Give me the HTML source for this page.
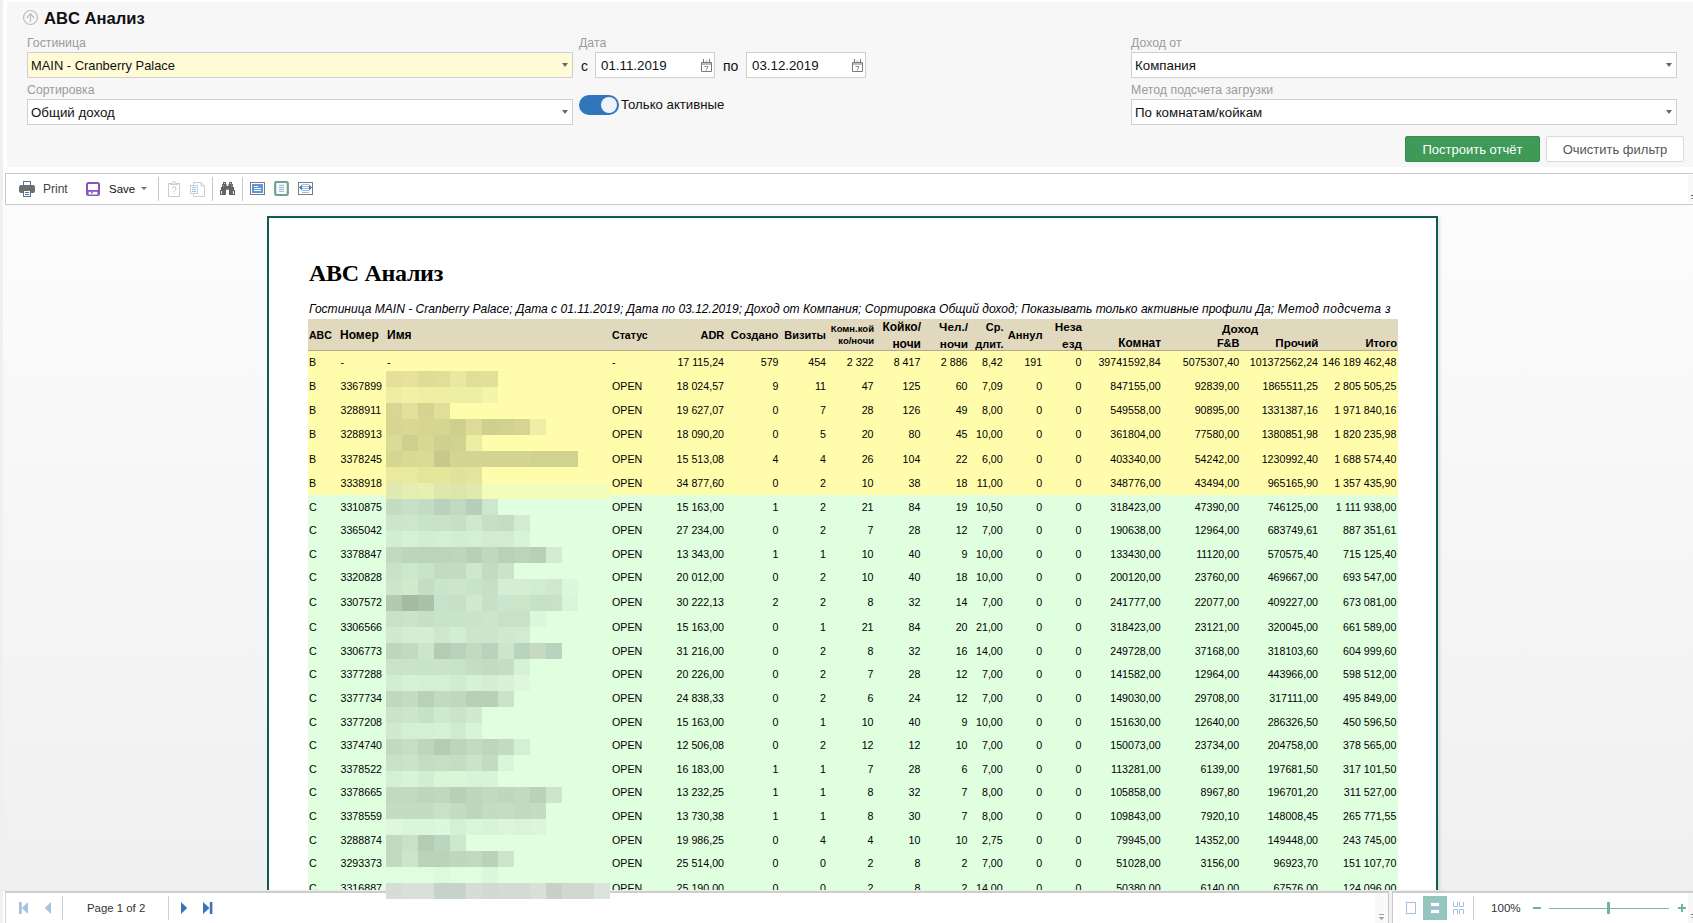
<!DOCTYPE html>
<html><head><meta charset="utf-8"><title>ABC Анализ</title>
<style>
*{box-sizing:border-box;margin:0;padding:0}
html,body{width:1693px;height:923px;overflow:hidden;background:#fff;font-family:"Liberation Sans",sans-serif;color:#111;position:relative}
.a{position:absolute;white-space:nowrap}
#strip{left:0;top:0;width:3px;height:923px;background:#f0f0f0}
#panel{left:7px;top:2px;width:1686px;height:165px;background:#f7f7f7;border-radius:2px 0 0 2px}
.lbl{position:absolute;font-size:12.3px;color:#9b9b9b;line-height:14px}
.inp{position:absolute;height:26px;border:1px solid #cfcfcf;background:#fff;font-size:13.3px;line-height:24px;padding-top:1px;padding-left:3px;color:#111}
.arr{position:absolute;right:4px;top:10px;width:0;height:0;border-left:3px solid transparent;border-right:3px solid transparent;border-top:4px solid #666}
.cal{position:absolute;top:6px;right:2px;width:12px;height:13px}
#tb{left:5px;top:173px;width:1690px;height:32px;border:1px solid #c8c8c8;background:#fff}
#viewer{left:3px;top:205px;width:1690px;height:687px;background:linear-gradient(#fcfcfc,#f0f0f0)}
#page{left:267px;top:216px;width:1171px;height:740px;border:2px solid #135b50;background:#fff;overflow:hidden;box-shadow:2px 1px 3px rgba(0,0,0,0.10)}
.c{position:absolute;font-size:10.67px;line-height:13px;white-space:nowrap;color:#000}
.c.r{text-align:right}
.h{position:absolute;font-size:11px;font-weight:bold;line-height:13px;white-space:nowrap;color:#000}
.hs{position:absolute;font-size:8.5px;font-weight:bold;line-height:10px;white-space:nowrap;color:#000}
#mos i{position:absolute;width:16px;height:16px;display:block}
#bb{left:5px;top:891px;width:1384px;height:32px;border-top:2px solid #cdcdcd;border-left:1px solid #d8d8d8;border-right:1px solid #c8c8c8;background:#fff}
#bb2{left:1392px;top:891px;width:301px;height:32px;border-top:2px solid #cdcdcd;border-left:1px solid #c8c8c8;background:#fff}
</style></head><body>
<div class="a" id="strip"></div>
<div class="a" id="panel"></div>

<!-- title -->
<svg class="a" style="left:22px;top:9px" width="17" height="17" viewBox="0 0 17 17"><circle cx="8.5" cy="8.5" r="7" fill="none" stroke="#bdbdbd" stroke-width="1.2"/><path d="M8.5 13V4.5M4.8 9l3.7-4.3L12.2 9" fill="none" stroke="#bdbdbd" stroke-width="1.2"/></svg>
<div class="a" style="left:44px;top:9px;font-size:16.6px;font-weight:bold;line-height:20px;color:#111">ABC Анализ</div>

<div class="lbl" style="left:27px;top:36px">Гостиница</div>
<div class="inp" style="left:27px;top:52px;width:546px;background:#fffbd6;font-size:12.9px">MAIN - Cranberry Palace<span class="arr"></span></div>
<div class="lbl" style="left:27px;top:83px">Сортировка</div>
<div class="inp" style="left:27px;top:99px;width:546px">Общий доход<span class="arr"></span></div>

<div class="lbl" style="left:579px;top:36px">Дата</div>
<div class="a" style="left:581px;top:58px;font-size:14px;line-height:16px">с</div>
<div class="inp" style="left:595px;top:52px;width:120px;padding-left:5px">01.11.2019<svg class="cal" style="top:6px;right:2px;width:11px;height:13px" viewBox="0 0 11 13"><path d="M0.5 3.5h10v9h-10z" fill="none" stroke="#7a7a7a"/><path d="M0.5 5h10" stroke="#7a7a7a"/><path d="M2.5 0v4M8.5 0v4" stroke="#7a7a7a"/><path d="M4.5 2h2" stroke="#aaa"/><path d="M3.5 7.5h3.5l-2 4" fill="none" stroke="#888" stroke-width="0.9"/></svg></div>
<div class="a" style="left:723px;top:58px;font-size:14px;line-height:16px">по</div>
<div class="inp" style="left:746px;top:52px;width:120px;padding-left:5px">03.12.2019<svg class="cal" style="top:6px;right:2px;width:11px;height:13px" viewBox="0 0 11 13"><path d="M0.5 3.5h10v9h-10z" fill="none" stroke="#7a7a7a"/><path d="M0.5 5h10" stroke="#7a7a7a"/><path d="M2.5 0v4M8.5 0v4" stroke="#7a7a7a"/><path d="M4.5 2h2" stroke="#aaa"/><path d="M3.5 7.5h3.5l-2 4" fill="none" stroke="#888" stroke-width="0.9"/></svg></div>

<div class="a" style="left:579px;top:95px;width:40px;height:20px;border-radius:10px;background:#2f76ba"></div>
<div class="a" style="left:601px;top:97px;width:16px;height:16px;border-radius:8px;background:#eef3f9"></div>
<div class="a" style="left:621px;top:97px;font-size:13.2px;line-height:16px">Только активные</div>

<div class="lbl" style="left:1131px;top:36px">Доход от</div>
<div class="inp" style="left:1131px;top:52px;width:546px">Компания<span class="arr"></span></div>
<div class="lbl" style="left:1131px;top:83px">Метод подсчета загрузки</div>
<div class="inp" style="left:1131px;top:99px;width:546px">По комнатам/койкам<span class="arr"></span></div>

<div class="a" style="left:1405px;top:136px;width:135px;height:26px;border-radius:2px;background:#3e9a56;border:1px solid #358c4b;color:#fff;font-size:13px;line-height:26px;text-align:center">Построить отчёт</div>
<div class="a" style="left:1546px;top:136px;width:138px;height:26px;border-radius:2px;background:#fff;border:1px solid #dadada;color:#555;font-size:13px;line-height:26px;text-align:center">Очистить фильтр</div>

<!-- toolbar -->
<div class="a" id="tb"></div><div class="a" style="left:1688px;top:175px;width:5px;height:28px;background:#f8f8f8"></div><div class="a" style="left:1691px;top:195px;width:2px;height:1px;background:#5a6478"></div><div class="a" style="left:1691px;top:198px;width:2px;height:1px;background:#8a94a8"></div>
<svg class="a" style="left:19px;top:181px" width="16" height="16" viewBox="0 0 16 16"><rect x="0" y="4" width="16" height="8" rx="2" fill="#6e6e6e"/><rect x="4.5" y="0.5" width="7" height="5" fill="#fff" stroke="#6e6e6e"/><path d="M5 4.5h6" stroke="#3b7dc4"/><rect x="4.5" y="9.5" width="7" height="6" fill="#fff" stroke="#6e6e6e"/><path d="M6 11.5h4M6 13.5h4" stroke="#3b7dc4"/></svg>
<div class="a" style="left:43px;top:182px;font-size:12px;line-height:15px;color:#444">Print</div>
<svg class="a" style="left:86px;top:182px" width="14" height="14" viewBox="0 0 14 14"><rect x="1" y="1" width="12" height="12" rx="1.5" fill="none" stroke="#8a55b8" stroke-width="2"/><rect x="1" y="8" width="12" height="5" fill="#8a55b8"/><rect x="2.6" y="9.8" width="8.8" height="2.8" fill="#fff"/><rect x="5.2" y="9.8" width="1.4" height="2" fill="#8a55b8"/></svg>
<div class="a" style="left:109px;top:182px;font-size:11.5px;line-height:15px;color:#111">Save</div>
<div class="a" style="left:141px;top:187px;width:0;height:0;border-left:3px solid transparent;border-right:3px solid transparent;border-top:3px solid #777"></div>
<div class="a" style="left:158px;top:177px;width:1px;height:24px;background:#c8c8c8"></div>
<svg class="a" style="left:167px;top:180px" width="14" height="18" viewBox="0 0 14 18"><rect x="1.5" y="3.5" width="11" height="13" fill="#fff" stroke="#cdcdcd"/><path d="M5 3.5a2 2 0 0 1 4 0" fill="#fff" stroke="#cdcdcd"/><path d="M3 4.5h8" stroke="#cdcdcd"/><path d="M5.3 8.5a1.8 1.8 0 1 1 2.4 1.6c-0.6 0.3 -0.7 0.8 -0.7 1.6M6.5 13.5h1" fill="none" stroke="#a9c4e4" stroke-width="0.9"/></svg>
<svg class="a" style="left:189px;top:181px" width="17" height="17" viewBox="0 0 17 17"><path d="M4.5 1.5h7.5l3.5 3.5v10.5h-11z" fill="#fff" stroke="#cdcdcd"/><path d="M12 1.5v3.5h3.5" fill="none" stroke="#cdcdcd"/><rect x="1.5" y="4.5" width="7" height="8" fill="#fff" stroke="#cdcdcd"/><path d="M3 6.5h4M3 8.5h4M3 10.5h4" stroke="#9dbde3"/></svg>
<div class="a" style="left:212px;top:177px;width:1px;height:24px;background:#c8c8c8"></div>
<svg class="a" style="left:220px;top:182px" width="15" height="13" viewBox="0 0 15 13"><g fill="#646464"><rect x="3" y="0" width="3" height="2.2"/><rect x="2" y="2" width="4.6" height="3.2"/><rect x="1" y="5" width="5.4" height="3.2"/><rect x="0" y="8" width="6" height="5"/><rect x="9" y="0" width="3" height="2.2"/><rect x="8.4" y="2" width="4.6" height="3.2"/><rect x="8.6" y="5" width="5.4" height="3.2"/><rect x="9" y="8" width="6" height="5"/><rect x="5.5" y="4" width="4" height="3.6"/></g><g fill="#fff"><rect x="1.2" y="9" width="0.9" height="3"/><rect x="12.9" y="9" width="0.9" height="3"/><rect x="4" y="1" width="0.9" height="0.9"/><rect x="10" y="1" width="0.9" height="0.9"/><rect x="2.6" y="3.3" width="0.9" height="0.9"/><rect x="11.5" y="3.3" width="0.9" height="0.9"/></g></svg>
<div class="a" style="left:242px;top:177px;width:1px;height:24px;background:#c8c8c8"></div>
<svg class="a" style="left:250px;top:182px" width="15" height="13" viewBox="0 0 15 13"><rect x="0.5" y="0.5" width="14" height="12" fill="#fff" stroke="#7c7c7c"/><rect x="2" y="2" width="11" height="9" fill="#5b97d8"/><path d="M4 4.5h4M4 6.5h7M4 8.5h7" stroke="#fff"/></svg>
<svg class="a" style="left:274px;top:181px" width="15" height="15" viewBox="0 0 15 15"><rect x="1.2" y="1" width="12.6" height="13" rx="1.5" fill="#fff" stroke="#6ba48e" stroke-width="2.2"/><path d="M5 4.3h5M5 6.4h5M5 8.4h5M5 10.4h5" stroke="#8fb0d8"/></svg>
<svg class="a" style="left:298px;top:182px" width="15" height="13" viewBox="0 0 15 13"><rect x="0.5" y="0.5" width="14" height="12" fill="#fff" stroke="#7c7c7c"/><path d="M4 2.4h7M4 4.5h7M4 6.5h7M4 8.5h7M4 10.5h7" stroke="#9dbde3"/><path d="M1 5.5l3-3v6z M14 5.5l-3-3v6z" fill="#3d7cc5"/></svg>

<!-- viewer -->
<div class="a" id="viewer"></div>
<div class="a" id="page"></div>
<div class="a" style="left:309px;top:260px;font-family:'Liberation Serif',serif;font-size:24px;font-weight:bold;line-height:27px;color:#000;letter-spacing:-0.3px">ABC Анализ</div>
<div class="a" style="left:309px;top:301.5px;width:1082px;overflow:hidden;font-size:12.05px;font-style:italic;line-height:15px;color:#000">Гостиница MAIN - Cranberry Palace; Дата с 01.11.2019; Дата по 03.12.2019; Доход от Компания; Сортировка Общий доход; Показывать только активные профили Да; <span style="letter-spacing:0.4px">Метод подсчета з</span></div>
<div class="a" style="left:308px;top:319px;width:1090px;height:32px;background:#e1d9be;border-bottom:1px solid #b9a98a"></div>
<div class="a" style="left:308px;top:351px;width:1090px;height:144px;background:#fffdab"></div>
<div class="a" style="left:308px;top:495px;width:1090px;height:395px;background:#dfffdf"></div>

<div class="h" style="left:309.0px;top:328.36px;font-size:10.5px;line-height:14px">ABC</div>
<div class="h" style="left:340.0px;top:327.84px;font-size:12px;line-height:14px">Номер</div>
<div class="h" style="left:387.0px;top:327.84px;font-size:12px;line-height:14px">Имя</div>
<div class="h" style="left:612.0px;top:328.33px;font-size:10.6px;line-height:14px">Статус</div>
<div class="h" style="right:968.7px;top:328.19px;font-size:11px;line-height:14px">ADR</div>
<div class="h" style="right:914.5px;top:328.08px;font-size:11.3px;line-height:14px">Создано</div>
<div class="h" style="right:867.0px;top:328.19px;font-size:11px;line-height:14px">Визиты</div>
<div class="h" style="right:819.0px;top:321.71px;font-size:9.5px;line-height:14px">Комн.кой</div>
<div class="h" style="right:819.0px;top:334.41px;font-size:9.5px;line-height:14px">ко/ночи</div>
<div class="h" style="right:772.0px;top:319.84px;font-size:12px;line-height:14px">Койко/</div>
<div class="h" style="right:772.0px;top:336.84px;font-size:12px;line-height:14px">ночи</div>
<div class="h" style="right:725.0px;top:319.91px;font-size:11.8px;line-height:14px">Чел./</div>
<div class="h" style="right:725.0px;top:336.91px;font-size:11.8px;line-height:14px">ночи</div>
<div class="h" style="right:689.5px;top:320.19px;font-size:11px;line-height:14px">Ср.</div>
<div class="h" style="right:689.5px;top:337.19px;font-size:11px;line-height:14px">длит.</div>
<div class="h" style="right:650.5px;top:328.12px;font-size:11.2px;line-height:14px">Аннул</div>
<div class="h" style="right:611.0px;top:319.91px;font-size:11.8px;line-height:14px">Неза</div>
<div class="h" style="right:611.0px;top:336.91px;font-size:11.8px;line-height:14px">езд</div>
<div class="h" style="right:532.0px;top:335.88px;font-size:11.9px;line-height:14px">Комнат</div>
<div class="h" style="left:1222.0px;top:321.61px;font-size:11.8px;line-height:14px">Доход</div>
<div class="h" style="right:453.5px;top:336.19px;font-size:11px;line-height:14px">F&amp;B</div>
<div class="h" style="right:374.5px;top:335.98px;font-size:11.6px;line-height:14px">Прочий</div>
<div class="h" style="right:296.0px;top:336.12px;font-size:11.2px;line-height:14px">Итого</div>

<div class="c" style="left:309.0px;top:356.0px">B</div>
<div class="c" style="left:340.5px;top:356.0px">-</div>
<div class="c" style="left:387.0px;top:356.0px">-</div>
<div class="c" style="left:612.0px;top:356.0px">-</div>
<div class="c r" style="right:969.0px;top:356.0px">17 115,24</div>
<div class="c r" style="right:914.5px;top:356.0px">579</div>
<div class="c r" style="right:867.0px;top:356.0px">454</div>
<div class="c r" style="right:819.5px;top:356.0px">2 322</div>
<div class="c r" style="right:772.7px;top:356.0px">8 417</div>
<div class="c r" style="right:725.5px;top:356.0px">2 886</div>
<div class="c r" style="right:690.3px;top:356.0px">8,42</div>
<div class="c r" style="right:650.8px;top:356.0px">191</div>
<div class="c r" style="right:611.5px;top:356.0px">0</div>
<div class="c r" style="right:532.4px;top:356.0px">39741592,84</div>
<div class="c r" style="right:453.9px;top:356.0px">5075307,40</div>
<div class="c r" style="right:375.0px;top:356.0px">101372562,24</div>
<div class="c r" style="right:296.6px;top:356.0px">146 189 462,48</div>
<div class="c" style="left:309.0px;top:380.0px">B</div>
<div class="c" style="left:340.5px;top:380.0px">3367899</div>
<div class="c" style="left:612.0px;top:380.0px">OPEN</div>
<div class="c r" style="right:969.0px;top:380.0px">18 024,57</div>
<div class="c r" style="right:914.5px;top:380.0px">9</div>
<div class="c r" style="right:867.0px;top:380.0px">11</div>
<div class="c r" style="right:819.5px;top:380.0px">47</div>
<div class="c r" style="right:772.7px;top:380.0px">125</div>
<div class="c r" style="right:725.5px;top:380.0px">60</div>
<div class="c r" style="right:690.3px;top:380.0px">7,09</div>
<div class="c r" style="right:650.8px;top:380.0px">0</div>
<div class="c r" style="right:611.5px;top:380.0px">0</div>
<div class="c r" style="right:532.4px;top:380.0px">847155,00</div>
<div class="c r" style="right:453.9px;top:380.0px">92839,00</div>
<div class="c r" style="right:375.0px;top:380.0px">1865511,25</div>
<div class="c r" style="right:296.6px;top:380.0px">2 805 505,25</div>
<div class="c" style="left:309.0px;top:404.0px">B</div>
<div class="c" style="left:340.5px;top:404.0px">3288911</div>
<div class="c" style="left:612.0px;top:404.0px">OPEN</div>
<div class="c r" style="right:969.0px;top:404.0px">19 627,07</div>
<div class="c r" style="right:914.5px;top:404.0px">0</div>
<div class="c r" style="right:867.0px;top:404.0px">7</div>
<div class="c r" style="right:819.5px;top:404.0px">28</div>
<div class="c r" style="right:772.7px;top:404.0px">126</div>
<div class="c r" style="right:725.5px;top:404.0px">49</div>
<div class="c r" style="right:690.3px;top:404.0px">8,00</div>
<div class="c r" style="right:650.8px;top:404.0px">0</div>
<div class="c r" style="right:611.5px;top:404.0px">0</div>
<div class="c r" style="right:532.4px;top:404.0px">549558,00</div>
<div class="c r" style="right:453.9px;top:404.0px">90895,00</div>
<div class="c r" style="right:375.0px;top:404.0px">1331387,16</div>
<div class="c r" style="right:296.6px;top:404.0px">1 971 840,16</div>
<div class="c" style="left:309.0px;top:428.0px">B</div>
<div class="c" style="left:340.5px;top:428.0px">3288913</div>
<div class="c" style="left:612.0px;top:428.0px">OPEN</div>
<div class="c r" style="right:969.0px;top:428.0px">18 090,20</div>
<div class="c r" style="right:914.5px;top:428.0px">0</div>
<div class="c r" style="right:867.0px;top:428.0px">5</div>
<div class="c r" style="right:819.5px;top:428.0px">20</div>
<div class="c r" style="right:772.7px;top:428.0px">80</div>
<div class="c r" style="right:725.5px;top:428.0px">45</div>
<div class="c r" style="right:690.3px;top:428.0px">10,00</div>
<div class="c r" style="right:650.8px;top:428.0px">0</div>
<div class="c r" style="right:611.5px;top:428.0px">0</div>
<div class="c r" style="right:532.4px;top:428.0px">361804,00</div>
<div class="c r" style="right:453.9px;top:428.0px">77580,00</div>
<div class="c r" style="right:375.0px;top:428.0px">1380851,98</div>
<div class="c r" style="right:296.6px;top:428.0px">1 820 235,98</div>
<div class="c" style="left:309.0px;top:453.0px">B</div>
<div class="c" style="left:340.5px;top:453.0px">3378245</div>
<div class="c" style="left:612.0px;top:453.0px">OPEN</div>
<div class="c r" style="right:969.0px;top:453.0px">15 513,08</div>
<div class="c r" style="right:914.5px;top:453.0px">4</div>
<div class="c r" style="right:867.0px;top:453.0px">4</div>
<div class="c r" style="right:819.5px;top:453.0px">26</div>
<div class="c r" style="right:772.7px;top:453.0px">104</div>
<div class="c r" style="right:725.5px;top:453.0px">22</div>
<div class="c r" style="right:690.3px;top:453.0px">6,00</div>
<div class="c r" style="right:650.8px;top:453.0px">0</div>
<div class="c r" style="right:611.5px;top:453.0px">0</div>
<div class="c r" style="right:532.4px;top:453.0px">403340,00</div>
<div class="c r" style="right:453.9px;top:453.0px">54242,00</div>
<div class="c r" style="right:375.0px;top:453.0px">1230992,40</div>
<div class="c r" style="right:296.6px;top:453.0px">1 688 574,40</div>
<div class="c" style="left:309.0px;top:477.0px">B</div>
<div class="c" style="left:340.5px;top:477.0px">3338918</div>
<div class="c" style="left:612.0px;top:477.0px">OPEN</div>
<div class="c r" style="right:969.0px;top:477.0px">34 877,60</div>
<div class="c r" style="right:914.5px;top:477.0px">0</div>
<div class="c r" style="right:867.0px;top:477.0px">2</div>
<div class="c r" style="right:819.5px;top:477.0px">10</div>
<div class="c r" style="right:772.7px;top:477.0px">38</div>
<div class="c r" style="right:725.5px;top:477.0px">18</div>
<div class="c r" style="right:690.3px;top:477.0px">11,00</div>
<div class="c r" style="right:650.8px;top:477.0px">0</div>
<div class="c r" style="right:611.5px;top:477.0px">0</div>
<div class="c r" style="right:532.4px;top:477.0px">348776,00</div>
<div class="c r" style="right:453.9px;top:477.0px">43494,00</div>
<div class="c r" style="right:375.0px;top:477.0px">965165,90</div>
<div class="c r" style="right:296.6px;top:477.0px">1 357 435,90</div>
<div class="c" style="left:309.0px;top:501.0px">C</div>
<div class="c" style="left:340.5px;top:501.0px">3310875</div>
<div class="c" style="left:612.0px;top:501.0px">OPEN</div>
<div class="c r" style="right:969.0px;top:501.0px">15 163,00</div>
<div class="c r" style="right:914.5px;top:501.0px">1</div>
<div class="c r" style="right:867.0px;top:501.0px">2</div>
<div class="c r" style="right:819.5px;top:501.0px">21</div>
<div class="c r" style="right:772.7px;top:501.0px">84</div>
<div class="c r" style="right:725.5px;top:501.0px">19</div>
<div class="c r" style="right:690.3px;top:501.0px">10,50</div>
<div class="c r" style="right:650.8px;top:501.0px">0</div>
<div class="c r" style="right:611.5px;top:501.0px">0</div>
<div class="c r" style="right:532.4px;top:501.0px">318423,00</div>
<div class="c r" style="right:453.9px;top:501.0px">47390,00</div>
<div class="c r" style="right:375.0px;top:501.0px">746125,00</div>
<div class="c r" style="right:296.6px;top:501.0px">1 111 938,00</div>
<div class="c" style="left:309.0px;top:523.5px">C</div>
<div class="c" style="left:340.5px;top:523.5px">3365042</div>
<div class="c" style="left:612.0px;top:523.5px">OPEN</div>
<div class="c r" style="right:969.0px;top:523.5px">27 234,00</div>
<div class="c r" style="right:914.5px;top:523.5px">0</div>
<div class="c r" style="right:867.0px;top:523.5px">2</div>
<div class="c r" style="right:819.5px;top:523.5px">7</div>
<div class="c r" style="right:772.7px;top:523.5px">28</div>
<div class="c r" style="right:725.5px;top:523.5px">12</div>
<div class="c r" style="right:690.3px;top:523.5px">7,00</div>
<div class="c r" style="right:650.8px;top:523.5px">0</div>
<div class="c r" style="right:611.5px;top:523.5px">0</div>
<div class="c r" style="right:532.4px;top:523.5px">190638,00</div>
<div class="c r" style="right:453.9px;top:523.5px">12964,00</div>
<div class="c r" style="right:375.0px;top:523.5px">683749,61</div>
<div class="c r" style="right:296.6px;top:523.5px">887 351,61</div>
<div class="c" style="left:309.0px;top:547.5px">C</div>
<div class="c" style="left:340.5px;top:547.5px">3378847</div>
<div class="c" style="left:612.0px;top:547.5px">OPEN</div>
<div class="c r" style="right:969.0px;top:547.5px">13 343,00</div>
<div class="c r" style="right:914.5px;top:547.5px">1</div>
<div class="c r" style="right:867.0px;top:547.5px">1</div>
<div class="c r" style="right:819.5px;top:547.5px">10</div>
<div class="c r" style="right:772.7px;top:547.5px">40</div>
<div class="c r" style="right:725.5px;top:547.5px">9</div>
<div class="c r" style="right:690.3px;top:547.5px">10,00</div>
<div class="c r" style="right:650.8px;top:547.5px">0</div>
<div class="c r" style="right:611.5px;top:547.5px">0</div>
<div class="c r" style="right:532.4px;top:547.5px">133430,00</div>
<div class="c r" style="right:453.9px;top:547.5px">11120,00</div>
<div class="c r" style="right:375.0px;top:547.5px">570575,40</div>
<div class="c r" style="right:296.6px;top:547.5px">715 125,40</div>
<div class="c" style="left:309.0px;top:570.5px">C</div>
<div class="c" style="left:340.5px;top:570.5px">3320828</div>
<div class="c" style="left:612.0px;top:570.5px">OPEN</div>
<div class="c r" style="right:969.0px;top:570.5px">20 012,00</div>
<div class="c r" style="right:914.5px;top:570.5px">0</div>
<div class="c r" style="right:867.0px;top:570.5px">2</div>
<div class="c r" style="right:819.5px;top:570.5px">10</div>
<div class="c r" style="right:772.7px;top:570.5px">40</div>
<div class="c r" style="right:725.5px;top:570.5px">18</div>
<div class="c r" style="right:690.3px;top:570.5px">10,00</div>
<div class="c r" style="right:650.8px;top:570.5px">0</div>
<div class="c r" style="right:611.5px;top:570.5px">0</div>
<div class="c r" style="right:532.4px;top:570.5px">200120,00</div>
<div class="c r" style="right:453.9px;top:570.5px">23760,00</div>
<div class="c r" style="right:375.0px;top:570.5px">469667,00</div>
<div class="c r" style="right:296.6px;top:570.5px">693 547,00</div>
<div class="c" style="left:309.0px;top:595.5px">C</div>
<div class="c" style="left:340.5px;top:595.5px">3307572</div>
<div class="c" style="left:612.0px;top:595.5px">OPEN</div>
<div class="c r" style="right:969.0px;top:595.5px">30 222,13</div>
<div class="c r" style="right:914.5px;top:595.5px">2</div>
<div class="c r" style="right:867.0px;top:595.5px">2</div>
<div class="c r" style="right:819.5px;top:595.5px">8</div>
<div class="c r" style="right:772.7px;top:595.5px">32</div>
<div class="c r" style="right:725.5px;top:595.5px">14</div>
<div class="c r" style="right:690.3px;top:595.5px">7,00</div>
<div class="c r" style="right:650.8px;top:595.5px">0</div>
<div class="c r" style="right:611.5px;top:595.5px">0</div>
<div class="c r" style="right:532.4px;top:595.5px">241777,00</div>
<div class="c r" style="right:453.9px;top:595.5px">22077,00</div>
<div class="c r" style="right:375.0px;top:595.5px">409227,00</div>
<div class="c r" style="right:296.6px;top:595.5px">673 081,00</div>
<div class="c" style="left:309.0px;top:621.0px">C</div>
<div class="c" style="left:340.5px;top:621.0px">3306566</div>
<div class="c" style="left:612.0px;top:621.0px">OPEN</div>
<div class="c r" style="right:969.0px;top:621.0px">15 163,00</div>
<div class="c r" style="right:914.5px;top:621.0px">0</div>
<div class="c r" style="right:867.0px;top:621.0px">1</div>
<div class="c r" style="right:819.5px;top:621.0px">21</div>
<div class="c r" style="right:772.7px;top:621.0px">84</div>
<div class="c r" style="right:725.5px;top:621.0px">20</div>
<div class="c r" style="right:690.3px;top:621.0px">21,00</div>
<div class="c r" style="right:650.8px;top:621.0px">0</div>
<div class="c r" style="right:611.5px;top:621.0px">0</div>
<div class="c r" style="right:532.4px;top:621.0px">318423,00</div>
<div class="c r" style="right:453.9px;top:621.0px">23121,00</div>
<div class="c r" style="right:375.0px;top:621.0px">320045,00</div>
<div class="c r" style="right:296.6px;top:621.0px">661 589,00</div>
<div class="c" style="left:309.0px;top:645.0px">C</div>
<div class="c" style="left:340.5px;top:645.0px">3306773</div>
<div class="c" style="left:612.0px;top:645.0px">OPEN</div>
<div class="c r" style="right:969.0px;top:645.0px">31 216,00</div>
<div class="c r" style="right:914.5px;top:645.0px">0</div>
<div class="c r" style="right:867.0px;top:645.0px">2</div>
<div class="c r" style="right:819.5px;top:645.0px">8</div>
<div class="c r" style="right:772.7px;top:645.0px">32</div>
<div class="c r" style="right:725.5px;top:645.0px">16</div>
<div class="c r" style="right:690.3px;top:645.0px">14,00</div>
<div class="c r" style="right:650.8px;top:645.0px">0</div>
<div class="c r" style="right:611.5px;top:645.0px">0</div>
<div class="c r" style="right:532.4px;top:645.0px">249728,00</div>
<div class="c r" style="right:453.9px;top:645.0px">37168,00</div>
<div class="c r" style="right:375.0px;top:645.0px">318103,60</div>
<div class="c r" style="right:296.6px;top:645.0px">604 999,60</div>
<div class="c" style="left:309.0px;top:667.5px">C</div>
<div class="c" style="left:340.5px;top:667.5px">3377288</div>
<div class="c" style="left:612.0px;top:667.5px">OPEN</div>
<div class="c r" style="right:969.0px;top:667.5px">20 226,00</div>
<div class="c r" style="right:914.5px;top:667.5px">0</div>
<div class="c r" style="right:867.0px;top:667.5px">2</div>
<div class="c r" style="right:819.5px;top:667.5px">7</div>
<div class="c r" style="right:772.7px;top:667.5px">28</div>
<div class="c r" style="right:725.5px;top:667.5px">12</div>
<div class="c r" style="right:690.3px;top:667.5px">7,00</div>
<div class="c r" style="right:650.8px;top:667.5px">0</div>
<div class="c r" style="right:611.5px;top:667.5px">0</div>
<div class="c r" style="right:532.4px;top:667.5px">141582,00</div>
<div class="c r" style="right:453.9px;top:667.5px">12964,00</div>
<div class="c r" style="right:375.0px;top:667.5px">443966,00</div>
<div class="c r" style="right:296.6px;top:667.5px">598 512,00</div>
<div class="c" style="left:309.0px;top:691.5px">C</div>
<div class="c" style="left:340.5px;top:691.5px">3377734</div>
<div class="c" style="left:612.0px;top:691.5px">OPEN</div>
<div class="c r" style="right:969.0px;top:691.5px">24 838,33</div>
<div class="c r" style="right:914.5px;top:691.5px">0</div>
<div class="c r" style="right:867.0px;top:691.5px">2</div>
<div class="c r" style="right:819.5px;top:691.5px">6</div>
<div class="c r" style="right:772.7px;top:691.5px">24</div>
<div class="c r" style="right:725.5px;top:691.5px">12</div>
<div class="c r" style="right:690.3px;top:691.5px">7,00</div>
<div class="c r" style="right:650.8px;top:691.5px">0</div>
<div class="c r" style="right:611.5px;top:691.5px">0</div>
<div class="c r" style="right:532.4px;top:691.5px">149030,00</div>
<div class="c r" style="right:453.9px;top:691.5px">29708,00</div>
<div class="c r" style="right:375.0px;top:691.5px">317111,00</div>
<div class="c r" style="right:296.6px;top:691.5px">495 849,00</div>
<div class="c" style="left:309.0px;top:715.5px">C</div>
<div class="c" style="left:340.5px;top:715.5px">3377208</div>
<div class="c" style="left:612.0px;top:715.5px">OPEN</div>
<div class="c r" style="right:969.0px;top:715.5px">15 163,00</div>
<div class="c r" style="right:914.5px;top:715.5px">0</div>
<div class="c r" style="right:867.0px;top:715.5px">1</div>
<div class="c r" style="right:819.5px;top:715.5px">10</div>
<div class="c r" style="right:772.7px;top:715.5px">40</div>
<div class="c r" style="right:725.5px;top:715.5px">9</div>
<div class="c r" style="right:690.3px;top:715.5px">10,00</div>
<div class="c r" style="right:650.8px;top:715.5px">0</div>
<div class="c r" style="right:611.5px;top:715.5px">0</div>
<div class="c r" style="right:532.4px;top:715.5px">151630,00</div>
<div class="c r" style="right:453.9px;top:715.5px">12640,00</div>
<div class="c r" style="right:375.0px;top:715.5px">286326,50</div>
<div class="c r" style="right:296.6px;top:715.5px">450 596,50</div>
<div class="c" style="left:309.0px;top:738.5px">C</div>
<div class="c" style="left:340.5px;top:738.5px">3374740</div>
<div class="c" style="left:612.0px;top:738.5px">OPEN</div>
<div class="c r" style="right:969.0px;top:738.5px">12 506,08</div>
<div class="c r" style="right:914.5px;top:738.5px">0</div>
<div class="c r" style="right:867.0px;top:738.5px">2</div>
<div class="c r" style="right:819.5px;top:738.5px">12</div>
<div class="c r" style="right:772.7px;top:738.5px">12</div>
<div class="c r" style="right:725.5px;top:738.5px">10</div>
<div class="c r" style="right:690.3px;top:738.5px">7,00</div>
<div class="c r" style="right:650.8px;top:738.5px">0</div>
<div class="c r" style="right:611.5px;top:738.5px">0</div>
<div class="c r" style="right:532.4px;top:738.5px">150073,00</div>
<div class="c r" style="right:453.9px;top:738.5px">23734,00</div>
<div class="c r" style="right:375.0px;top:738.5px">204758,00</div>
<div class="c r" style="right:296.6px;top:738.5px">378 565,00</div>
<div class="c" style="left:309.0px;top:763.0px">C</div>
<div class="c" style="left:340.5px;top:763.0px">3378522</div>
<div class="c" style="left:612.0px;top:763.0px">OPEN</div>
<div class="c r" style="right:969.0px;top:763.0px">16 183,00</div>
<div class="c r" style="right:914.5px;top:763.0px">1</div>
<div class="c r" style="right:867.0px;top:763.0px">1</div>
<div class="c r" style="right:819.5px;top:763.0px">7</div>
<div class="c r" style="right:772.7px;top:763.0px">28</div>
<div class="c r" style="right:725.5px;top:763.0px">6</div>
<div class="c r" style="right:690.3px;top:763.0px">7,00</div>
<div class="c r" style="right:650.8px;top:763.0px">0</div>
<div class="c r" style="right:611.5px;top:763.0px">0</div>
<div class="c r" style="right:532.4px;top:763.0px">113281,00</div>
<div class="c r" style="right:453.9px;top:763.0px">6139,00</div>
<div class="c r" style="right:375.0px;top:763.0px">197681,50</div>
<div class="c r" style="right:296.6px;top:763.0px">317 101,50</div>
<div class="c" style="left:309.0px;top:785.5px">C</div>
<div class="c" style="left:340.5px;top:785.5px">3378665</div>
<div class="c" style="left:612.0px;top:785.5px">OPEN</div>
<div class="c r" style="right:969.0px;top:785.5px">13 232,25</div>
<div class="c r" style="right:914.5px;top:785.5px">1</div>
<div class="c r" style="right:867.0px;top:785.5px">1</div>
<div class="c r" style="right:819.5px;top:785.5px">8</div>
<div class="c r" style="right:772.7px;top:785.5px">32</div>
<div class="c r" style="right:725.5px;top:785.5px">7</div>
<div class="c r" style="right:690.3px;top:785.5px">8,00</div>
<div class="c r" style="right:650.8px;top:785.5px">0</div>
<div class="c r" style="right:611.5px;top:785.5px">0</div>
<div class="c r" style="right:532.4px;top:785.5px">105858,00</div>
<div class="c r" style="right:453.9px;top:785.5px">8967,80</div>
<div class="c r" style="right:375.0px;top:785.5px">196701,20</div>
<div class="c r" style="right:296.6px;top:785.5px">311 527,00</div>
<div class="c" style="left:309.0px;top:809.5px">C</div>
<div class="c" style="left:340.5px;top:809.5px">3378559</div>
<div class="c" style="left:612.0px;top:809.5px">OPEN</div>
<div class="c r" style="right:969.0px;top:809.5px">13 730,38</div>
<div class="c r" style="right:914.5px;top:809.5px">1</div>
<div class="c r" style="right:867.0px;top:809.5px">1</div>
<div class="c r" style="right:819.5px;top:809.5px">8</div>
<div class="c r" style="right:772.7px;top:809.5px">30</div>
<div class="c r" style="right:725.5px;top:809.5px">7</div>
<div class="c r" style="right:690.3px;top:809.5px">8,00</div>
<div class="c r" style="right:650.8px;top:809.5px">0</div>
<div class="c r" style="right:611.5px;top:809.5px">0</div>
<div class="c r" style="right:532.4px;top:809.5px">109843,00</div>
<div class="c r" style="right:453.9px;top:809.5px">7920,10</div>
<div class="c r" style="right:375.0px;top:809.5px">148008,45</div>
<div class="c r" style="right:296.6px;top:809.5px">265 771,55</div>
<div class="c" style="left:309.0px;top:834.0px">C</div>
<div class="c" style="left:340.5px;top:834.0px">3288874</div>
<div class="c" style="left:612.0px;top:834.0px">OPEN</div>
<div class="c r" style="right:969.0px;top:834.0px">19 986,25</div>
<div class="c r" style="right:914.5px;top:834.0px">0</div>
<div class="c r" style="right:867.0px;top:834.0px">4</div>
<div class="c r" style="right:819.5px;top:834.0px">4</div>
<div class="c r" style="right:772.7px;top:834.0px">10</div>
<div class="c r" style="right:725.5px;top:834.0px">10</div>
<div class="c r" style="right:690.3px;top:834.0px">2,75</div>
<div class="c r" style="right:650.8px;top:834.0px">0</div>
<div class="c r" style="right:611.5px;top:834.0px">0</div>
<div class="c r" style="right:532.4px;top:834.0px">79945,00</div>
<div class="c r" style="right:453.9px;top:834.0px">14352,00</div>
<div class="c r" style="right:375.0px;top:834.0px">149448,00</div>
<div class="c r" style="right:296.6px;top:834.0px">243 745,00</div>
<div class="c" style="left:309.0px;top:856.5px">C</div>
<div class="c" style="left:340.5px;top:856.5px">3293373</div>
<div class="c" style="left:612.0px;top:856.5px">OPEN</div>
<div class="c r" style="right:969.0px;top:856.5px">25 514,00</div>
<div class="c r" style="right:914.5px;top:856.5px">0</div>
<div class="c r" style="right:867.0px;top:856.5px">0</div>
<div class="c r" style="right:819.5px;top:856.5px">2</div>
<div class="c r" style="right:772.7px;top:856.5px">8</div>
<div class="c r" style="right:725.5px;top:856.5px">2</div>
<div class="c r" style="right:690.3px;top:856.5px">7,00</div>
<div class="c r" style="right:650.8px;top:856.5px">0</div>
<div class="c r" style="right:611.5px;top:856.5px">0</div>
<div class="c r" style="right:532.4px;top:856.5px">51028,00</div>
<div class="c r" style="right:453.9px;top:856.5px">3156,00</div>
<div class="c r" style="right:375.0px;top:856.5px">96923,70</div>
<div class="c r" style="right:296.6px;top:856.5px">151 107,70</div>
<div class="c" style="left:309.0px;top:881.5px">C</div>
<div class="c" style="left:340.5px;top:881.5px">3316887</div>
<div class="c" style="left:612.0px;top:881.5px">OPEN</div>
<div class="c r" style="right:969.0px;top:881.5px">25 190,00</div>
<div class="c r" style="right:914.5px;top:881.5px">0</div>
<div class="c r" style="right:867.0px;top:881.5px">0</div>
<div class="c r" style="right:819.5px;top:881.5px">2</div>
<div class="c r" style="right:772.7px;top:881.5px">8</div>
<div class="c r" style="right:725.5px;top:881.5px">2</div>
<div class="c r" style="right:690.3px;top:881.5px">14,00</div>
<div class="c r" style="right:650.8px;top:881.5px">0</div>
<div class="c r" style="right:611.5px;top:881.5px">0</div>
<div class="c r" style="right:532.4px;top:881.5px">50380,00</div>
<div class="c r" style="right:453.9px;top:881.5px">6140,00</div>
<div class="c r" style="right:375.0px;top:881.5px">67576,00</div>
<div class="c r" style="right:296.6px;top:881.5px">124 096,00</div>

<!-- bottom bars -->
<div class="a" id="bb"></div>
<div class="a" style="left:0;top:890px;width:1693px;height:1px;background:#ececec"></div><div class="a" style="left:1389px;top:891px;width:3px;height:32px;background:#f0f0f0"></div><div class="a" style="left:1375px;top:893px;width:13px;height:30px;background:#f9f9f9"></div>
<div class="a" id="bb2"></div>
<svg class="a" style="left:19px;top:902px" width="10" height="12" viewBox="0 0 10 12"><rect x="0" y="0" width="2.8" height="12" fill="#a8c3e0"/><path d="M9 0v12L2.8 6z" fill="#a8c3e0"/></svg>
<svg class="a" style="left:44px;top:902px" width="8" height="12" viewBox="0 0 8 12"><path d="M7 0v12L0.8 6z" fill="#a8c3e0"/></svg>
<div class="a" style="left:62px;top:896px;width:1px;height:24px;background:#cfcfcf"></div>
<div class="a" style="left:87px;top:901px;font-size:11.4px;line-height:14px;color:#333">Page 1 of 2</div>
<div class="a" style="left:168px;top:896px;width:1px;height:24px;background:#cfcfcf"></div>
<svg class="a" style="left:180px;top:902px" width="8" height="12" viewBox="0 0 8 12"><path d="M1 0v12L7.2 6z" fill="#3a75b8"/></svg>
<svg class="a" style="left:203px;top:902px" width="10" height="12" viewBox="0 0 10 12"><path d="M0 0v12L6.5 6z" fill="#3a75b8"/><rect x="6.8" y="0" width="2.6" height="12" fill="#3a75b8"/></svg>
<svg class="a" style="left:1378px;top:913px" width="7" height="8" viewBox="0 0 7 8"><path d="M1 1.5h5" stroke="#9aa4b4"/><path d="M0.5 4h6l-3 3z" fill="#9aa4b4"/></svg>
<div class="a" style="left:1406px;top:902px;width:10px;height:12px;border:1px solid #a4bde2"></div>
<div class="a" style="left:1423px;top:896px;width:24px;height:24px;background:#93c6bd"></div>
<div class="a" style="left:1430px;top:902px;width:10px;height:5px;background:#fff;border:1px solid #a9bde0"></div>
<div class="a" style="left:1430px;top:909px;width:10px;height:5px;background:#fff;border:1px solid #a9bde0"></div>
<svg class="a" style="left:1453px;top:902px" width="12" height="12" viewBox="0 0 12 12"><path d="M0.5 0v4.5h4V0M6.5 0v4.5h4V0M0.5 12V7.5h4V12M6.5 12V7.5h4V12" fill="none" stroke="#a4bde2"/></svg>
<div class="a" style="left:1473px;top:896px;width:1px;height:24px;background:#cfcfcf"></div>
<div class="a" style="left:1491px;top:901px;font-size:11.6px;line-height:14px;color:#333">100%</div>
<div class="a" style="left:1533px;top:907px;width:8px;height:2px;background:#72b1a5"></div>
<div class="a" style="left:1549px;top:908px;width:120px;height:1px;background:#7ab8ac"></div>
<div class="a" style="left:1607px;top:902px;width:3px;height:12px;background:#72b1a5"></div>
<div class="a" style="left:1678px;top:907px;width:8px;height:2px;background:#72b1a5"></div>
<div class="a" style="left:1681px;top:904px;width:2px;height:8px;background:#72b1a5"></div>

<div class="a" style="left:1688px;top:893px;width:5px;height:30px;background:#f7f7f7"></div><div class="a" style="left:1691px;top:914px;width:2px;height:1px;background:#6a7488"></div><div class="a" style="left:1691px;top:917px;width:2px;height:1px;background:#9aa4b4"></div>
<div id="mos"><i style="left:386px;top:371px;background:#e4e09a"></i><i style="left:402px;top:371px;background:#e6e29c"></i><i style="left:418px;top:371px;background:#dedd98"></i><i style="left:434px;top:371px;background:#e0df98"></i><i style="left:450px;top:371px;background:#e8e8a0"></i><i style="left:466px;top:371px;background:#dfdf98"></i><i style="left:482px;top:371px;background:#e0e09a"></i><i style="left:498px;top:371px;background:#fcfcac"></i><i style="left:386px;top:387px;background:#efeda2"></i><i style="left:402px;top:387px;background:#f2f0a4"></i><i style="left:418px;top:387px;background:#f0eea2"></i><i style="left:434px;top:387px;background:#f0eea2"></i><i style="left:450px;top:387px;background:#eeeea4"></i><i style="left:466px;top:387px;background:#eeeea4"></i><i style="left:482px;top:387px;background:#f4f4aa"></i><i style="left:386px;top:403px;background:#d8d692"></i><i style="left:402px;top:403px;background:#e2e09a"></i><i style="left:418px;top:403px;background:#d6d490"></i><i style="left:434px;top:403px;background:#e0e09a"></i><i style="left:386px;top:419px;background:#d6d692"></i><i style="left:402px;top:419px;background:#d8d892"></i><i style="left:418px;top:419px;background:#d6d690"></i><i style="left:434px;top:419px;background:#d4d692"></i><i style="left:450px;top:419px;background:#d0d08e"></i><i style="left:466px;top:419px;background:#dcdc98"></i><i style="left:482px;top:419px;background:#d0d08e"></i><i style="left:498px;top:419px;background:#d2d290"></i><i style="left:514px;top:419px;background:#d6d692"></i><i style="left:530px;top:419px;background:#eeeea4"></i><i style="left:386px;top:435px;background:#dadc96"></i><i style="left:402px;top:435px;background:#d0d08e"></i><i style="left:418px;top:435px;background:#d8d892"></i><i style="left:434px;top:435px;background:#d0d08e"></i><i style="left:450px;top:435px;background:#d0d290"></i><i style="left:466px;top:435px;background:#ececa2"></i><i style="left:386px;top:451px;background:#d6d692"></i><i style="left:402px;top:451px;background:#dada94"></i><i style="left:418px;top:451px;background:#dadb94"></i><i style="left:434px;top:451px;background:#c8c88a"></i><i style="left:450px;top:451px;background:#d4d592"></i><i style="left:466px;top:451px;background:#d4d592"></i><i style="left:482px;top:451px;background:#d4d592"></i><i style="left:498px;top:451px;background:#d4d592"></i><i style="left:514px;top:451px;background:#d4d592"></i><i style="left:530px;top:451px;background:#d0d290"></i><i style="left:546px;top:451px;background:#d0d290"></i><i style="left:562px;top:451px;background:#d0d290"></i><i style="left:578px;top:451px;background:#fcfcaa"></i><i style="left:386px;top:467px;background:#eaea9e"></i><i style="left:402px;top:467px;background:#eaea9e"></i><i style="left:418px;top:467px;background:#e4e49a"></i><i style="left:434px;top:467px;background:#e6e69a"></i><i style="left:450px;top:467px;background:#e2e29c"></i><i style="left:466px;top:467px;background:#e4e49e"></i><i style="left:386px;top:483px;background:#e0eab0"></i><i style="left:402px;top:483px;background:#e4eeb0"></i><i style="left:418px;top:483px;background:#e8f0b0"></i><i style="left:434px;top:483px;background:#dee8ac"></i><i style="left:450px;top:483px;background:#dce6aa"></i><i style="left:466px;top:483px;background:#e0eaae"></i><i style="left:482px;top:483px;background:#f4fcbc"></i><i style="left:498px;top:483px;background:#f4fcbc"></i><i style="left:514px;top:483px;background:#f4fcbc"></i><i style="left:530px;top:483px;background:#f4fcbc"></i><i style="left:546px;top:483px;background:#f4fcbc"></i><i style="left:562px;top:483px;background:#f4fcbc"></i><i style="left:578px;top:483px;background:#f4fcbc"></i><i style="left:594px;top:483px;background:#f4fcbc"></i><i style="left:386px;top:499px;background:#c4dcc4"></i><i style="left:402px;top:499px;background:#c8dfc8"></i><i style="left:418px;top:499px;background:#c4dcc4"></i><i style="left:434px;top:499px;background:#b8d2bc"></i><i style="left:450px;top:499px;background:#c0dac2"></i><i style="left:466px;top:499px;background:#b6cfb8"></i><i style="left:482px;top:499px;background:#cce6d0"></i><i style="left:386px;top:515px;background:#cce6cc"></i><i style="left:402px;top:515px;background:#cde6cd"></i><i style="left:418px;top:515px;background:#c8e4c8"></i><i style="left:434px;top:515px;background:#c8e2c8"></i><i style="left:450px;top:515px;background:#c6e0c6"></i><i style="left:466px;top:515px;background:#d0e8d0"></i><i style="left:482px;top:515px;background:#c6e0c6"></i><i style="left:498px;top:515px;background:#c6dcc4"></i><i style="left:514px;top:515px;background:#d2ecd2"></i><i style="left:386px;top:531px;background:#d2eed2"></i><i style="left:402px;top:531px;background:#d6f2d6"></i><i style="left:418px;top:531px;background:#d2eed2"></i><i style="left:434px;top:531px;background:#d4f0d4"></i><i style="left:450px;top:531px;background:#d2eed2"></i><i style="left:466px;top:531px;background:#d4f0d4"></i><i style="left:482px;top:531px;background:#d2ecd2"></i><i style="left:498px;top:531px;background:#d2ecd2"></i><i style="left:514px;top:531px;background:#d8f4d8"></i><i style="left:386px;top:547px;background:#c2dac2"></i><i style="left:402px;top:547px;background:#bcd6bc"></i><i style="left:418px;top:547px;background:#bcd4bc"></i><i style="left:434px;top:547px;background:#bcd4bc"></i><i style="left:450px;top:547px;background:#bed6be"></i><i style="left:466px;top:547px;background:#b8d0b8"></i><i style="left:482px;top:547px;background:#c0d8c0"></i><i style="left:498px;top:547px;background:#b8d2b8"></i><i style="left:514px;top:547px;background:#bcd4bc"></i><i style="left:530px;top:547px;background:#b8d0b8"></i><i style="left:546px;top:547px;background:#d2ecd2"></i><i style="left:386px;top:563px;background:#c8e2c8"></i><i style="left:402px;top:563px;background:#cce8cc"></i><i style="left:418px;top:563px;background:#c8e4c8"></i><i style="left:434px;top:563px;background:#c2dcc2"></i><i style="left:450px;top:563px;background:#c2dcc2"></i><i style="left:466px;top:563px;background:#cee8ce"></i><i style="left:482px;top:563px;background:#c2dcc2"></i><i style="left:498px;top:563px;background:#cae4ca"></i><i style="left:386px;top:579px;background:#cce6cc"></i><i style="left:402px;top:579px;background:#d0eace"></i><i style="left:418px;top:579px;background:#c4dec4"></i><i style="left:434px;top:579px;background:#cae6ca"></i><i style="left:450px;top:579px;background:#cce6cc"></i><i style="left:466px;top:579px;background:#c8e4c8"></i><i style="left:482px;top:579px;background:#c6e0c6"></i><i style="left:498px;top:579px;background:#d4eed4"></i><i style="left:514px;top:579px;background:#d4eed4"></i><i style="left:530px;top:579px;background:#d2ecd2"></i><i style="left:546px;top:579px;background:#d0e8d0"></i><i style="left:562px;top:579px;background:#dcf8dc"></i><i style="left:386px;top:595px;background:#b4c8b2"></i><i style="left:402px;top:595px;background:#a6baa2"></i><i style="left:418px;top:595px;background:#aac2aa"></i><i style="left:434px;top:595px;background:#c6e2cc"></i><i style="left:450px;top:595px;background:#c8e0c8"></i><i style="left:466px;top:595px;background:#d0eace"></i><i style="left:482px;top:595px;background:#c8e0c8"></i><i style="left:498px;top:595px;background:#cae6d0"></i><i style="left:514px;top:595px;background:#cce6c8"></i><i style="left:530px;top:595px;background:#c4e2c6"></i><i style="left:546px;top:595px;background:#c8e2c6"></i><i style="left:562px;top:595px;background:#daf6da"></i><i style="left:386px;top:611px;background:#c8e2c8"></i><i style="left:402px;top:611px;background:#cae4ca"></i><i style="left:418px;top:611px;background:#c6e0c6"></i><i style="left:434px;top:611px;background:#c8e4c8"></i><i style="left:450px;top:611px;background:#c8e4c8"></i><i style="left:466px;top:611px;background:#cae4ca"></i><i style="left:482px;top:611px;background:#cce6cc"></i><i style="left:498px;top:611px;background:#c8e2c8"></i><i style="left:514px;top:611px;background:#c8e2c8"></i><i style="left:530px;top:611px;background:#dcf8dc"></i><i style="left:386px;top:627px;background:#d0eacf"></i><i style="left:402px;top:627px;background:#d4eed4"></i><i style="left:418px;top:627px;background:#d4eed4"></i><i style="left:434px;top:627px;background:#cee8ce"></i><i style="left:450px;top:627px;background:#d2eed2"></i><i style="left:466px;top:627px;background:#cce6cc"></i><i style="left:482px;top:627px;background:#cce6cc"></i><i style="left:498px;top:627px;background:#d0eacf"></i><i style="left:514px;top:627px;background:#d2ecd2"></i><i style="left:386px;top:643px;background:#bed6be"></i><i style="left:402px;top:643px;background:#c2dac2"></i><i style="left:418px;top:643px;background:#cce6cc"></i><i style="left:434px;top:643px;background:#b4ccb4"></i><i style="left:450px;top:643px;background:#b8d2bc"></i><i style="left:466px;top:643px;background:#c2dac2"></i><i style="left:482px;top:643px;background:#b8d2bc"></i><i style="left:498px;top:643px;background:#cce6cc"></i><i style="left:514px;top:643px;background:#b8d4c0"></i><i style="left:530px;top:643px;background:#c6dac2"></i><i style="left:546px;top:643px;background:#b8d4c0"></i><i style="left:386px;top:659px;background:#cae4ca"></i><i style="left:402px;top:659px;background:#cae4ca"></i><i style="left:418px;top:659px;background:#c8e4c8"></i><i style="left:434px;top:659px;background:#cae4ca"></i><i style="left:450px;top:659px;background:#c8e4c8"></i><i style="left:466px;top:659px;background:#c4dec4"></i><i style="left:482px;top:659px;background:#c2dcc2"></i><i style="left:498px;top:659px;background:#c4dec4"></i><i style="left:514px;top:659px;background:#d6f2d6"></i><i style="left:386px;top:675px;background:#d2eed2"></i><i style="left:402px;top:675px;background:#d6f2d6"></i><i style="left:418px;top:675px;background:#d4f0d4"></i><i style="left:434px;top:675px;background:#d4f0d4"></i><i style="left:450px;top:675px;background:#d0ecd0"></i><i style="left:466px;top:675px;background:#d6f2d6"></i><i style="left:482px;top:675px;background:#d4eed4"></i><i style="left:498px;top:675px;background:#d8f2d8"></i><i style="left:514px;top:675px;background:#def8de"></i><i style="left:386px;top:691px;background:#c0d8c0"></i><i style="left:402px;top:691px;background:#c4dcc4"></i><i style="left:418px;top:691px;background:#b8d2b8"></i><i style="left:434px;top:691px;background:#c2dac2"></i><i style="left:450px;top:691px;background:#c0d8c0"></i><i style="left:466px;top:691px;background:#b8d0b8"></i><i style="left:482px;top:691px;background:#b8d0b8"></i><i style="left:498px;top:691px;background:#cae4ca"></i><i style="left:386px;top:707px;background:#cae4ca"></i><i style="left:402px;top:707px;background:#cce6cc"></i><i style="left:418px;top:707px;background:#c6e2c6"></i><i style="left:434px;top:707px;background:#cceacc"></i><i style="left:450px;top:707px;background:#cae4ca"></i><i style="left:466px;top:707px;background:#d0ead0"></i><i style="left:386px;top:723px;background:#d0ead0"></i><i style="left:402px;top:723px;background:#d4f0d4"></i><i style="left:418px;top:723px;background:#d4f0d4"></i><i style="left:434px;top:723px;background:#d6f2d6"></i><i style="left:450px;top:723px;background:#d0ecd0"></i><i style="left:466px;top:723px;background:#d8f4d8"></i><i style="left:386px;top:739px;background:#c2dac2"></i><i style="left:402px;top:739px;background:#c6dec6"></i><i style="left:418px;top:739px;background:#bed6be"></i><i style="left:434px;top:739px;background:#b4ccb4"></i><i style="left:450px;top:739px;background:#bcd6bc"></i><i style="left:466px;top:739px;background:#c2dcc4"></i><i style="left:482px;top:739px;background:#bed6bc"></i><i style="left:498px;top:739px;background:#c2dcc4"></i><i style="left:514px;top:739px;background:#d4f0d4"></i><i style="left:386px;top:755px;background:#c8e2c8"></i><i style="left:402px;top:755px;background:#cae4ca"></i><i style="left:418px;top:755px;background:#c4dec4"></i><i style="left:434px;top:755px;background:#c6e0c6"></i><i style="left:450px;top:755px;background:#c4dec4"></i><i style="left:466px;top:755px;background:#cae4ca"></i><i style="left:482px;top:755px;background:#c2dcc2"></i><i style="left:498px;top:755px;background:#daf6da"></i><i style="left:386px;top:771px;background:#d4f0d4"></i><i style="left:402px;top:771px;background:#d8f4d8"></i><i style="left:418px;top:771px;background:#d2eed2"></i><i style="left:434px;top:771px;background:#d8f6d8"></i><i style="left:450px;top:771px;background:#d8f6d8"></i><i style="left:466px;top:771px;background:#d8f4d8"></i><i style="left:482px;top:771px;background:#d8f4d8"></i><i style="left:386px;top:787px;background:#c2dac2"></i><i style="left:402px;top:787px;background:#c2dac2"></i><i style="left:418px;top:787px;background:#bed6be"></i><i style="left:434px;top:787px;background:#c0d8c0"></i><i style="left:450px;top:787px;background:#b8d0b8"></i><i style="left:466px;top:787px;background:#bed6be"></i><i style="left:482px;top:787px;background:#c2dac2"></i><i style="left:498px;top:787px;background:#bed8be"></i><i style="left:514px;top:787px;background:#c2dac2"></i><i style="left:530px;top:787px;background:#bad2ba"></i><i style="left:546px;top:787px;background:#cce6cc"></i><i style="left:386px;top:803px;background:#c4dcc4"></i><i style="left:402px;top:803px;background:#c4dcc4"></i><i style="left:418px;top:803px;background:#c4dcc4"></i><i style="left:434px;top:803px;background:#c8e2c8"></i><i style="left:450px;top:803px;background:#c4dcc4"></i><i style="left:466px;top:803px;background:#bed6be"></i><i style="left:482px;top:803px;background:#c4dcc4"></i><i style="left:498px;top:803px;background:#c4dec4"></i><i style="left:514px;top:803px;background:#c2dac2"></i><i style="left:530px;top:803px;background:#c4dcc4"></i><i style="left:386px;top:819px;background:#def8de"></i><i style="left:402px;top:819px;background:#daf6da"></i><i style="left:418px;top:819px;background:#daf6da"></i><i style="left:434px;top:819px;background:#dcf8dc"></i><i style="left:450px;top:819px;background:#d4f0d4"></i><i style="left:466px;top:819px;background:#d8f6d8"></i><i style="left:482px;top:819px;background:#d8f4d8"></i><i style="left:498px;top:819px;background:#dcf6dc"></i><i style="left:514px;top:819px;background:#daf4da"></i><i style="left:530px;top:819px;background:#dcf6dc"></i><i style="left:386px;top:835px;background:#c2dac2"></i><i style="left:402px;top:835px;background:#c8e2c8"></i><i style="left:418px;top:835px;background:#b4ccb4"></i><i style="left:434px;top:835px;background:#b8d6c0"></i><i style="left:450px;top:835px;background:#cee8ce"></i><i style="left:386px;top:851px;background:#c2dac2"></i><i style="left:402px;top:851px;background:#cce6cc"></i><i style="left:418px;top:851px;background:#bad4ba"></i><i style="left:434px;top:851px;background:#bad4ba"></i><i style="left:450px;top:851px;background:#bed8be"></i><i style="left:466px;top:851px;background:#c0dac0"></i><i style="left:482px;top:851px;background:#bad2ba"></i><i style="left:498px;top:851px;background:#cce6cc"></i><i style="left:386px;top:867px;background:#dffedf"></i><i style="left:402px;top:867px;background:#dffedf"></i><i style="left:418px;top:867px;background:#dffedf"></i><i style="left:434px;top:867px;background:#dcfadc"></i><i style="left:450px;top:867px;background:#dffedf"></i><i style="left:466px;top:867px;background:#dffedf"></i><i style="left:482px;top:867px;background:#dcf8dc"></i><i style="left:386px;top:883px;background:#d6dcd6"></i><i style="left:402px;top:883px;background:#d8e0d8"></i><i style="left:418px;top:883px;background:#d8e0d8"></i><i style="left:434px;top:883px;background:#c8d2cc"></i><i style="left:450px;top:883px;background:#c8d2cc"></i><i style="left:466px;top:883px;background:#d6ddd6"></i><i style="left:482px;top:883px;background:#d2d8d2"></i><i style="left:498px;top:883px;background:#d4dad4"></i><i style="left:514px;top:883px;background:#d4dad4"></i><i style="left:530px;top:883px;background:#d8e0d8"></i><i style="left:546px;top:883px;background:#c8d0c8"></i><i style="left:562px;top:883px;background:#d0d8d0"></i><i style="left:578px;top:883px;background:#d0d8d0"></i><i style="left:594px;top:883px;background:#dae4dc"></i></div>
</body></html>
